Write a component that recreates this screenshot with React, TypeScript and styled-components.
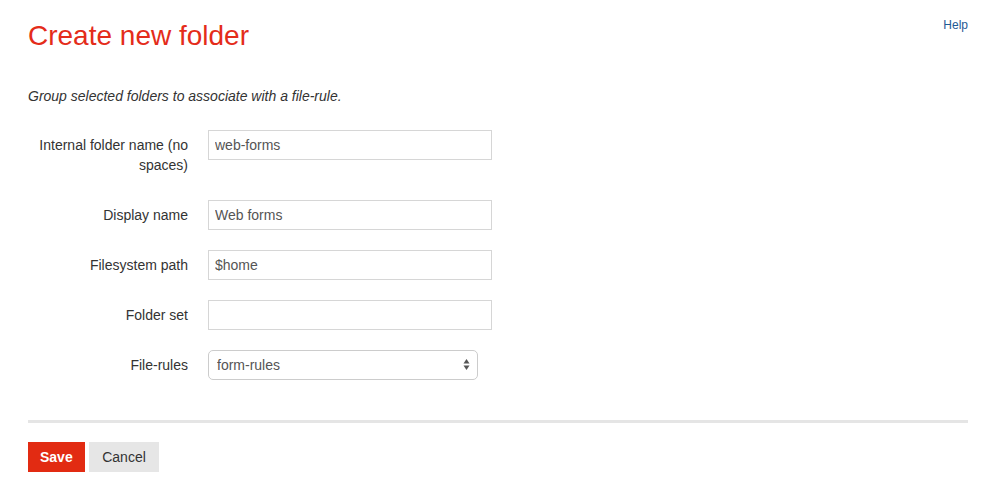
import React from 'react';
import styled, { createGlobalStyle } from 'styled-components';

const GlobalStyle = createGlobalStyle`
    html, body {
        margin: 0;
        padding: 0;
        background: #ffffff;
        font-family: "Liberation Sans", Arial, Helvetica, sans-serif;
        color: #333333;
        font-size: 14px;
    }
`;

const Page = styled.div`
    padding: 0 14px 0 28px;
`;

const Header = styled.div`
    display: flex;
    justify-content: space-between;
    align-items: flex-start;
`;

const Title = styled.h1`
    margin: 20px 0 0;
    font-size: 28px;
    line-height: 31px;
    font-weight: normal;
    color: #e42c1a;
`;

const HelpLink = styled.a`
    margin-top: 17px;
    font-size: 12px;
    line-height: 17px;
    color: #1f5a94;
    text-decoration: none;
`;

const Intro = styled.p`
    margin: 35px 0 24px;
    font-size: 14px;
    line-height: 20px;
    font-style: italic;
    color: #333333;
`;

const Form = styled.form`
    display: grid;
    grid-template-columns: 160px 284px;
    column-gap: 20px;
    row-gap: 20px;
    align-items: start;
`;

const Label = styled.label`
    padding: 5px 0;
    text-align: right;
    font-size: 14px;
    line-height: 20px;
    color: #333333;
`;

const TextInput = styled.input`
    box-sizing: border-box;
    width: 284px;
    height: 30px;
    margin: 0;
    padding: 0 6px;
    border: 1px solid #d6d6d6;
    border-radius: 0;
    font-family: inherit;
    font-size: 14px;
    color: #555555;
    background: #ffffff;
    outline: none;
`;

const SelectWrap = styled.div`
    position: relative;
    width: 270px;
    height: 30px;
`;

const Select = styled.select`
    box-sizing: border-box;
    width: 100%;
    height: 30px;
    margin: 0;
    padding: 0 24px 0 8px;
    border: 1px solid #cccccc;
    border-radius: 5px;
    appearance: none;
    -webkit-appearance: none;
    background: #ffffff;
    font-family: inherit;
    font-size: 14px;
    color: #555555;
    outline: none;
`;

const SelectArrows = styled.svg`
    position: absolute;
    right: 8px;
    top: 8px;
    pointer-events: none;
`;

const Divider = styled.hr`
    margin: 40px 0 19px;
    border: none;
    height: 3px;
    background: #e5e5e5;
`;

const Actions = styled.div`
    display: flex;
    gap: 4px;
`;

const Button = styled.button<{ $primary?: boolean }>`
    height: 30px;
    padding: ${props => props.$primary ? '0 12px' : '0 13.5px'};
    border: none;
    border-radius: 0;
    font-family: inherit;
    font-size: 14px;
    font-weight: ${props => props.$primary ? 'bold' : 'normal'};
    color: ${props => props.$primary ? '#ffffff' : '#333333'};
    background: ${props => props.$primary ? '#e22b12' : '#e6e6e6'};
    cursor: pointer;
`;

const App: React.FC = () => {
    return (
        <>
            <GlobalStyle />
            <Page>
                <Header>
                    <Title>Create new folder</Title>
                    <HelpLink href="#">Help</HelpLink>
                </Header>

                <Intro>Group selected folders to associate with a file-rule.</Intro>

                <Form onSubmit={e => e.preventDefault()}>
                    <Label htmlFor="name">Internal folder name (no spaces)</Label>
                    <TextInput id="name" defaultValue="web-forms" />

                    <Label htmlFor="display">Display name</Label>
                    <TextInput id="display" defaultValue="Web forms" />

                    <Label htmlFor="path">Filesystem path</Label>
                    <TextInput id="path" defaultValue="$home" />

                    <Label htmlFor="set">Folder set</Label>
                    <TextInput id="set" defaultValue="" />

                    <Label htmlFor="rules">File-rules</Label>
                    <SelectWrap>
                        <Select id="rules" defaultValue="form-rules">
                            <option value="form-rules">form-rules</option>
                        </Select>
                        {/* up/down arrows of the select */}
                        <SelectArrows width="7" height="13" viewBox="0 0 7 13">
                            <path d="M3.5 1 L6.5 5.5 L0.5 5.5 Z" fill="#555555" />
                            <path d="M3.5 12 L6.5 7.5 L0.5 7.5 Z" fill="#555555" />
                        </SelectArrows>
                    </SelectWrap>
                </Form>

                <Divider />

                <Actions>
                    <Button $primary>Save</Button>
                    <Button>Cancel</Button>
                </Actions>
            </Page>
        </>
    );
};

export default App;
